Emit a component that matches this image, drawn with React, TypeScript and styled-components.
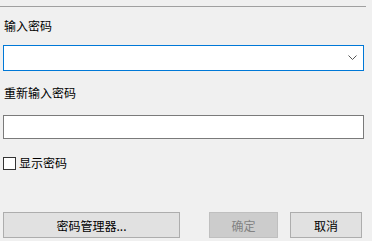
import React, { useState } from 'react'
import styled, { createGlobalStyle } from 'styled-components'

const GlobalStyle = createGlobalStyle`
  html, body {
    margin: 0;
    padding: 0;
    background: #f0f0f0;
  }
  body {
    font-family: "Microsoft YaHei", "Noto Sans CJK SC", "Noto Sans", sans-serif;
    font-size: 12px;
    color: #000;
  }
`

const Dialog = styled.div`
  width: 372px;
  height: 241px;
  display: flex;
  flex-direction: column;
  box-sizing: border-box;
  padding: 6px 0 0 0;
`

const Divider = styled.div`
  height: 1px;
  width: 366px;
  background: #a0a0a0;
`

const Body = styled.div`
  display: flex;
  flex-direction: column;
  padding: 0 8px 0 3px;
  flex: 1;
`

const Label = styled.div<{ top: number }>`
  margin-top: ${({ top }) => top}px;
  padding-left: 1px;
  line-height: 16px;
  height: 16px;
`

const Field = styled.div<{ focused?: boolean; h: number; top: number }>`
  margin-top: ${({ top }) => top}px;
  height: ${({ h }) => h}px;
  box-sizing: border-box;
  border: 1px solid ${({ focused }) => (focused ? '#0078d7' : '#7a7a7a')};
  background: #fff;
  display: flex;
  align-items: center;
  justify-content: flex-end;
  padding-right: 6px;
`

const CheckRow = styled.label`
  margin-top: 16px;
  display: flex;
  align-items: center;
  gap: 3px;
  line-height: 16px;
`

const Box = styled.span`
  width: 13px;
  height: 13px;
  box-sizing: border-box;
  border: 1px solid #333;
  background: #fff;
`

const Buttons = styled.div`
  margin-top: auto;
  margin-bottom: 3px;
  display: flex;
  align-items: center;
`

const Button = styled.div<{ w: number; disabled?: boolean; gap?: number }>`
  width: ${({ w }) => w}px;
  height: 26px;
  margin-left: ${({ gap }) => gap || 0}px;
  box-sizing: border-box;
  border: 1px solid ${({ disabled }) => (disabled ? '#bfbfbf' : '#adadad')};
  background: ${({ disabled }) => (disabled ? '#cccccc' : '#e1e1e1')};
  color: ${({ disabled }) => (disabled ? '#838383' : '#000')};
  display: flex;
  align-items: center;
  justify-content: center;
`

const Chevron = () => (
  <svg width="9" height="6" viewBox="0 0 9 6">
    <path d="M0.5 0.5 L4.5 4.5 L8.5 0.5" fill="none" stroke="#555" strokeWidth="1" />
  </svg>
)

export default function App() {
  const [show, setShow] = useState(false)
  return (
    <>
      <GlobalStyle />
      <Dialog>
        <Divider />
        <Body>
          <Label top={11}>输入密码</Label>
          <Field focused h={26} top={11}>
            <Chevron />
          </Field>
          <Label top={14}>重新输入密码</Label>
          <Field h={24} top={14} />
          <CheckRow onClick={() => setShow(!show)}>
            <Box />
            <span>显示密码</span>
          </CheckRow>
          <Buttons>
            <Button w={177}>密码管理器...</Button>
            <Button w={69} gap={29} disabled>
              确定
            </Button>
            <Button w={72} gap={12}>
              取消
            </Button>
          </Buttons>
        </Body>
      </Dialog>
    </>
  )
}
